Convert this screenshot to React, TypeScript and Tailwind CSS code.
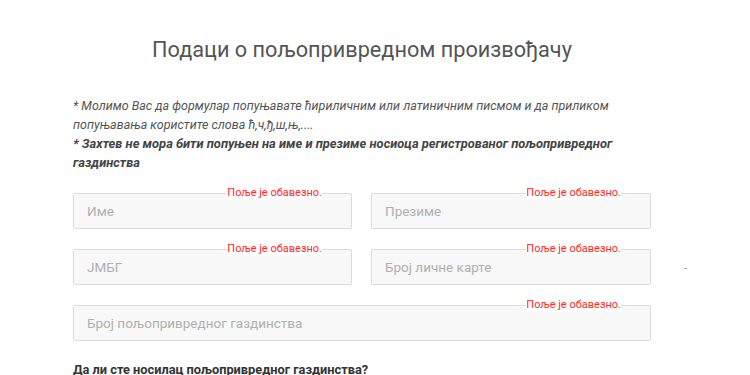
import React from "react";

const font = { fontFamily: "Roboto, 'Noto Sans', sans-serif" };

function Field({ placeholder, className = "" }: { placeholder: string; className?: string }) {
  return (
    <div className={"relative shrink-0 " + className}>
      <div className="h-[36px] w-full rounded-[2px] border border-[#dcdcdc] bg-[#f8f8f8] pl-[13px] flex items-center text-[13.5px] text-[#b0b0b0]">
        {placeholder}
      </div>
      <span className="absolute right-[30px] top-[-7px] bg-white text-[11px] leading-[14px] text-[#ff2a2a]">
        Поље је обавезно.
      </span>
    </div>
  );
}

export default function App() {
  return (
    <div className="w-[750px] h-[375px] overflow-hidden bg-white" style={font}>
      <div className="pl-[73px] w-[651px]">
        <h1 className="pt-[36px] text-center text-[21.7px] leading-[28px] text-[#555] font-normal">
          Подаци о пољопривредном произвођачу
        </h1>
        <div className="mt-[32px] text-[12.5px] leading-[19px] text-[#555]">
          <p className="italic">
            * Молимо Вас да формулар попуњавате ћириличним или латиничним писмом и да приликом попуњавања користите слова ћ,ч,ђ,ш,њ,....
          </p>
          <p className="italic font-bold text-[12.9px] text-[#444]">
            * Захтев не мора бити попуњен на име и презиме носиоца регистрованог пољопривредног газдинства
          </p>
        </div>
        <div className="mt-[21px] flex gap-[19px]">
          <Field placeholder="Име" className="w-[279px]" />
          <Field placeholder="Презиме" className="w-[280px]" />
        </div>
        <div className="mt-[20px] flex gap-[19px] items-center">
          <Field placeholder="ЈМБГ" className="w-[279px]" />
          <Field placeholder="Број личне карте" className="w-[280px]" />
          <span className="ml-[14px] mt-[4px] shrink-0 text-[11px] text-[#888] w-0 overflow-visible whitespace-nowrap">-</span>
        </div>
        <div className="mt-[20px]">
          <Field placeholder="Број пољопривредног газдинства" className="w-[578px]" />
        </div>
        <p className="mt-[20px] text-[12.8px] leading-[18px] font-bold text-[#333]">
          Да ли сте носилац пољопривредног газдинства?
        </p>
      </div>
    </div>
  );
}
